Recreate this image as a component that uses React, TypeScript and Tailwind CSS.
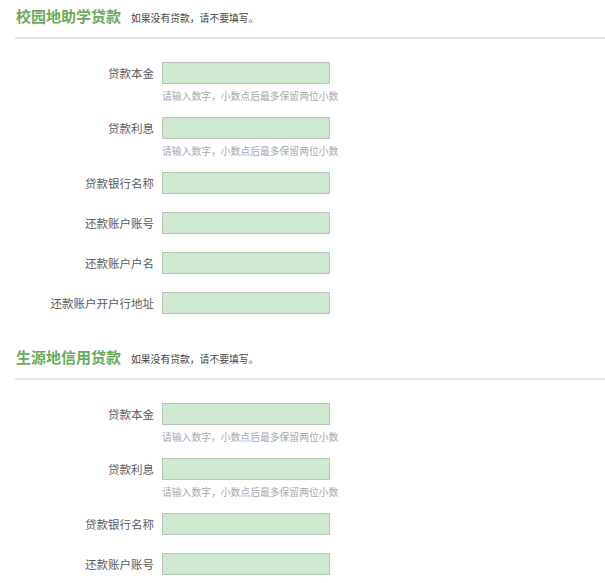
import React from "react";

type Field = { label: string; hint?: boolean };

const HINT = "请输入数字，小数点后最多保留两位小数";

function Row({ label, hint }: Field) {
  return (
    <div className={hint ? "mb-[15px]" : "mb-[18px]"}>
      <div className="flex items-center">
        <div className="w-[154px] text-right text-[11.5px] leading-[22px] text-[#5a5a5a]">{label}</div>
        <div className="ml-[8px] h-[22px] w-[168px] border border-[#b7c4b7] bg-[#cfe8d0]" />
      </div>
      {hint && (
        <div className="ml-[162px] mt-[6px] text-[9.8px] leading-[12px] text-[#a8a8a8]">{HINT}</div>
      )}
    </div>
  );
}

function Section({ title, fields }: { title: string; fields: Field[] }) {
  return (
    <div>
      <div className="flex h-[30px] items-end pb-[5px] pl-[16px]">
        <span className="text-[15px] font-bold leading-[18px] text-[#6aab5c]">{title}</span>
        <span className="ml-[10px] text-[9.8px] leading-[14px] text-[#444]">如果没有贷款，请不要填写。</span>
      </div>
      <div className="ml-[15px] mt-[7px] h-[2px] bg-[#e3e3e3]" />
      <div className="mt-[23px]">
        {fields.map((f, i) => (
          <Row key={i} {...f} />
        ))}
      </div>
    </div>
  );
}

export default function App() {
  return (
    <div
      className="h-[583px] w-[605px] overflow-hidden bg-white"
      style={{ fontFamily: '"Noto Sans CJK SC", "Noto Sans", sans-serif' }}
    >
      <Section
        title="校园地助学贷款"
        fields={[
          { label: "贷款本金", hint: true },
          { label: "贷款利息", hint: true },
          { label: "贷款银行名称" },
          { label: "还款账户账号" },
          { label: "还款账户户名" },
          { label: "还款账户开户行地址" },
        ]}
      />
      <div className="h-[9px]" />
      <Section
        title="生源地信用贷款"
        fields={[
          { label: "贷款本金", hint: true },
          { label: "贷款利息", hint: true },
          { label: "贷款银行名称" },
          { label: "还款账户账号" },
        ]}
      />
    </div>
  );
}
